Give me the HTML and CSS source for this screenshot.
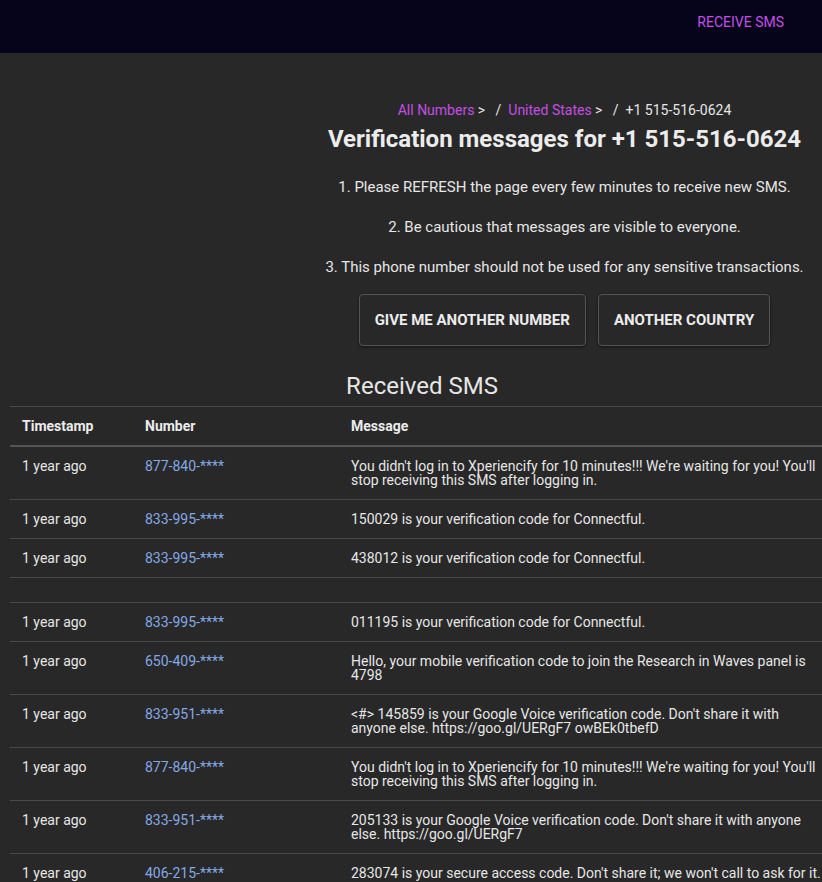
FILE: index.html
```html
<!DOCTYPE html>
<html lang="en">
<head>
    <meta charset="UTF-8">
    <meta name="viewport" content="width=device-width, initial-scale=1.0">
    <title>Receive SMS - +1 515-516-0624</title>
    <link rel="stylesheet" href="styles.css">
</head>
<body>
    <header class="topbar">
        <a class="topbar-link" href="#">RECEIVE SMS</a>
    </header>

    <section class="intro">
        <nav class="crumbs">
            <a href="#">All Numbers</a> &gt; &nbsp; /&nbsp; <a href="#">United States</a> &gt; &nbsp; /&nbsp; +1 515-516-0624
        </nav>
        <h1 class="title">Verification messages for +1 515-516-0624</h1>
        <p class="note">1. Please REFRESH the page every few minutes to receive new SMS.</p>
        <p class="note">2. Be cautious that messages are visible to everyone.</p>
        <p class="note">3. This phone number should not be used for any sensitive transactions.</p>
        <div class="actions">
            <button class="btn">GIVE ME ANOTHER NUMBER</button>
            <button class="btn">ANOTHER COUNTRY</button>
        </div>
    </section>

    <h2 class="received">Received SMS</h2>

    <table class="sms-table">
        <thead>
            <tr>
                <th class="col-time">Timestamp</th>
                <th class="col-num">Number</th>
                <th>Message</th>
            </tr>
        </thead>
        <tbody>
            <tr>
                <td>1 year ago</td>
                <td><a href="#">877-840-****</a></td>
                <td>You didn't log in to Xperiencify for 10 minutes!!! We're waiting for you! You'll stop receiving this SMS after logging in.</td>
            </tr>
            <tr>
                <td>1 year ago</td>
                <td><a href="#">833-995-****</a></td>
                <td>150029 is your verification code for Connectful.</td>
            </tr>
            <tr>
                <td>1 year ago</td>
                <td><a href="#">833-995-****</a></td>
                <td>438012 is your verification code for Connectful.</td>
            </tr>
            <tr class="spacer">
                <td></td>
                <td></td>
                <td></td>
            </tr>
            <tr>
                <td>1 year ago</td>
                <td><a href="#">833-995-****</a></td>
                <td>011195 is your verification code for Connectful.</td>
            </tr>
            <tr>
                <td>1 year ago</td>
                <td><a href="#">650-409-****</a></td>
                <td>Hello, your mobile verification code to join the Research in Waves panel is 4798</td>
            </tr>
            <tr>
                <td>1 year ago</td>
                <td><a href="#">833-951-****</a></td>
                <td>&lt;#&gt; 145859 is your Google Voice verification code. Don't share it with anyone else. https://goo.gl/UERgF7 owBEk0tbefD</td>
            </tr>
            <tr>
                <td>1 year ago</td>
                <td><a href="#">877-840-****</a></td>
                <td>You didn't log in to Xperiencify for 10 minutes!!! We're waiting for you! You'll stop receiving this SMS after logging in.</td>
            </tr>
            <tr>
                <td>1 year ago</td>
                <td><a href="#">833-951-****</a></td>
                <td>205133 is your Google Voice verification code. Don't share it with anyone else. https://goo.gl/UERgF7</td>
            </tr>
            <tr>
                <td>1 year ago</td>
                <td><a href="#">406-215-****</a></td>
                <td>283074 is your secure access code. Don't share it; we won't call to ask for it.</td>
            </tr>
        </tbody>
    </table>
</body>
</html>
```

FILE: styles.css
```css
html {
    overflow-x: hidden;
}
body {
    margin: 0;
    background: #282828;
    color: #e6e6e6;
    font-family: Roboto, "Liberation Sans", sans-serif;
    font-size: 14px;
}
a {
    text-decoration: none;
}
.topbar {
    height: 53px;
    background: #05041b;
    display: flex;
    justify-content: flex-end;
    align-items: flex-start;
    box-sizing: border-box;
    padding: 14px 38px 0 0;
}
.topbar-link {
    color: #c64ee6;
    font-size: 14px;
    line-height: 16px;
}
.intro {
    margin-left: 307px;
    text-align: center;
    padding-top: 49px;
}
.crumbs {
    font-size: 14px;
    line-height: 16px;
    color: #e6e6e6;
}
.crumbs a {
    color: #c64ee6;
}
.title {
    margin: 7px 0 0;
    font-size: 24px;
    font-weight: 700;
    line-height: 28px;
    color: #ececec;
}
.note {
    margin: 0;
    font-size: 15px;
    line-height: 18px;
    padding-top: 22px;
}
.note:first-of-type {
    padding-top: 25px;
}
.actions {
    display: flex;
    justify-content: center;
    gap: 12px;
    margin-top: 18px;
}
.btn {
    background: #282828;
    color: #ececec;
    border: 1px solid #555;
    border-radius: 4px;
    box-shadow: 0 1px 3px rgba(0, 0, 0, 0.5);
    font-family: Roboto, "Liberation Sans", sans-serif;
    font-size: 15px;
    font-weight: 700;
    height: 52px;
    padding: 0 15px;
}
.received {
    margin: 28px 0 0 10px;
    width: 824px;
    text-align: center;
    font-size: 24px;
    font-weight: 400;
    line-height: 24px;
    color: #e6e6e6;
}
.sms-table {
    margin: 8px 0 0 10px;
    width: 828px;
    border-collapse: collapse;
    border-top: 1px solid #4a4a4a;
}
.sms-table th,
.sms-table td {
    text-align: left;
    vertical-align: top;
    padding: 12px;
    line-height: 14px;
    border-bottom: 1px solid #4a4a4a;
}
.sms-table th {
    font-weight: 700;
    color: #ececec;
    border-bottom: 2px solid #555;
}
.col-time {
    width: 99px;
}
.col-num {
    width: 182px;
}
.sms-table td a {
    color: #84a8e6;
}
.spacer td {
    padding: 0;
    height: 24px;
}
```
